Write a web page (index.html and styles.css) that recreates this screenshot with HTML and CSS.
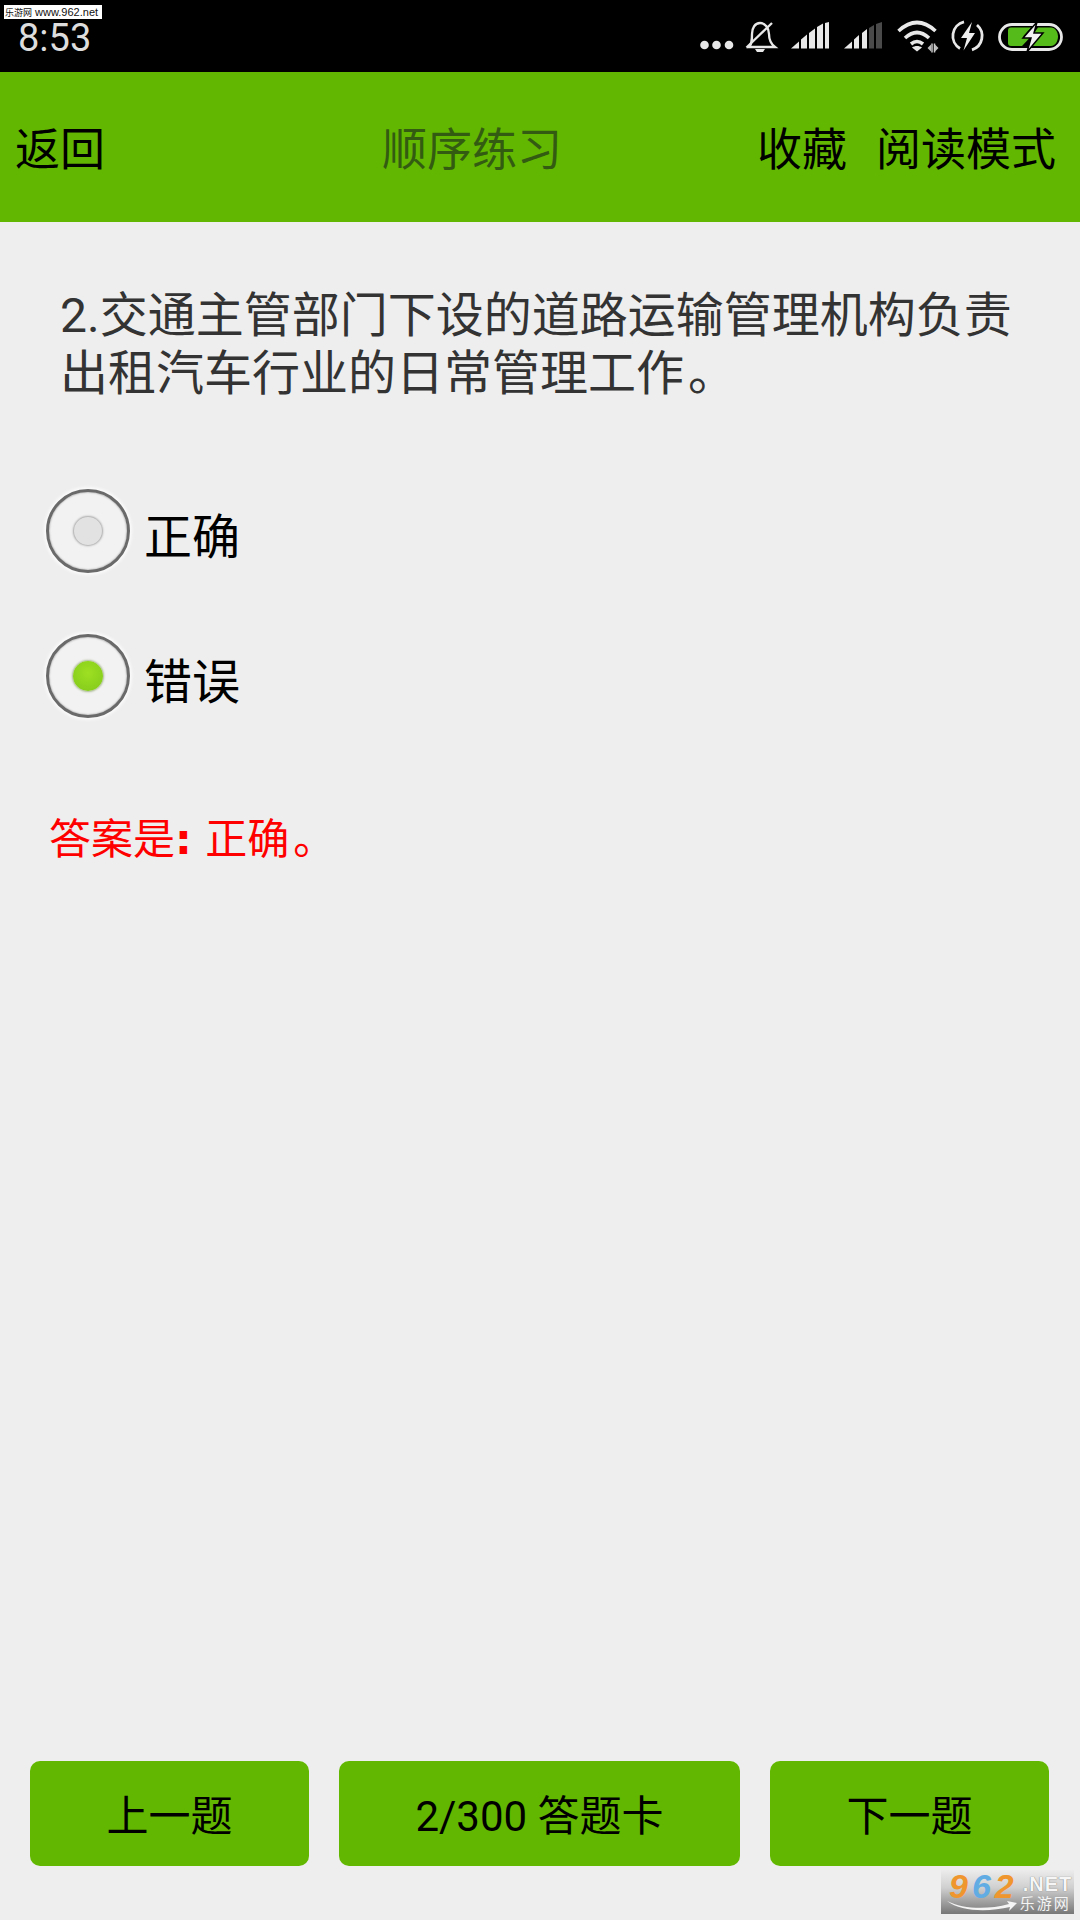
FILE: index.html
```html
<!DOCTYPE html>
<html lang="zh">
<head>
<meta charset="utf-8">
<title>顺序练习</title>
<link rel="stylesheet" href="styles.css">
</head>
<body>
<div class="page">
  <div class="status">
    <div class="clock">8:53</div>
    <svg class="status-icons" viewBox="680 0 400 72" width="400" height="72">
      <g fill="#e8e8e8">
        <circle cx="704.500" cy="45" r="4.300"/><circle cx="716.500" cy="45" r="4.300"/><circle cx="729" cy="45" r="4.300"/>
      </g>
      <path d="M749 47h26c-4-3-6-7-6-13 0-6-4-11-9-11s-8 5-8 11c0 6 0 10-3 13z" fill="none" stroke="#e8e8e8" stroke-width="2.300"/>
      <path d="M746.500 47.500 772 23" fill="none" stroke="#e8e8e8" stroke-width="2.300"/>
      <path d="M755 49h10l-2 3h-6z" fill="#e8e8e8"/>
      <g fill="#e8e8e8">
        <path d="M791 48.500 799 41.500v7z"/><path d="M801 39.500l6-5v14h-6z"/><path d="M809 33l6-4.500v20h-6z"/><path d="M817 27l6-3.500v25h-6z"/><path d="M825 23l4-1v26.500h-4z"/>
        <path d="M844 48.500 852 41.500v7z"/><path d="M854 39.500l5-4.500v13.500h-5z"/><path d="M862 33l5-4v19.500h-5z"/>
      </g>
      <g fill="#4a4a4a"><path d="M869 28l5-3v23.500h-5z"/><path d="M876 24l6-2v26.500h-6z"/></g>
      <g fill="none" stroke="#e8e8e8" stroke-width="3.600">
        <path d="M898.500 31Q917 14 935.500 31"/>
        <path d="M905 38Q917 27 929 38"/>
        <path d="M911 44Q917 39 923 44"/>
      </g>
      <path d="M912 47.500c3-2 7-2 10 0l-5 4z" fill="#e8e8e8"/>
      <path d="M932 43.500v9M934.500 43.500v9" stroke="#c8c8c8" stroke-width="1.500"/>
      <path d="M927.500 48l3.500-3.500v7zM938.500 48l-3.500-3.500v7z" fill="#bbb"/>
      <path d="M964 21.900A14.500 14.500 0 0 0 960 48.500M977 25A14.500 14.500 0 0 1 972 49.800" fill="none" stroke="#e8e8e8" stroke-width="2.800"/>
      <path d="M972 22 961 38h6l-3.500 12.500L975 33h-6z" fill="#f0f0f0"/>
      <rect x="999.500" y="24.500" width="62" height="25" rx="12.500" fill="none" stroke="#e8e8e8" stroke-width="2.800"/>
      <path d="M1011 27.500h20l-8 9h8l-9 9.500h-11a3 3 0 0 1-3-3V30.500a3 3 0 0 1 3-3zM1038 27.500h13c4 0 7 4 7 9s-3 9.500-7 9.500h-21l9-10h-7z" fill="#55bb1a"/>
      <path d="M1037 22 1023 38h8l-4 14 16-19h-9z" fill="#f2f2f2" stroke="#000" stroke-width="1.500"/>
    </svg>
    <div class="stamp"><span class="stamp-cn">乐游网</span> www.962.net</div>
  </div>

  <header class="topbar">
    <span class="nav-back">返回</span>
    <span class="nav-title">顺序练习</span>
    <div class="nav-actions">
      <span>收藏</span>
      <span>阅读模式</span>
    </div>
  </header>

  <main class="content">
    <p class="question">2.交通主管部门下设的道路运输管理机构负责<br>出租汽车行业的日常管理工作<span class="stop">。</span></p>
    <div class="options">
      <div class="option">
        <span class="radio"><span class="dot dot-off"></span></span>
        <span class="option-label">正确</span>
      </div>
      <div class="option">
        <span class="radio"><span class="dot dot-on"></span></span>
        <span class="option-label">错误</span>
      </div>
    </div>
    <p class="answer">答案是<b class="colon">:</b> 正确<span class="stop">。</span></p>
  </main>

  <footer class="actions">
    <div class="btn btn-side">上一题</div>
    <div class="btn btn-mid">2/300 答题卡</div>
    <div class="btn btn-side">下一题</div>
  </footer>

  <div class="mark">
    <div class="mark-num"><span class="o">9</span><span class="b">6</span><span class="o">2</span></div>
    <div class="mark-side">
      <div class="mark-net">.NET</div>
      <div class="mark-cn">乐游网</div>
    </div>
    <svg class="mark-swoosh" viewBox="0 0 70 12" width="70" height="12"><path d="M0 1C16 9 40 10 62 4l-2-3 10 2-8 8 1-4C42 12 14 12 0 1z" fill="#f4f4f4"/></svg>
  </div>
</div>
</body>
</html>
```

FILE: styles.css
```css
* { box-sizing: border-box; }
html, body { margin: 0; padding: 0; }
body {
  width: 1080px;
  height: 1920px;
  overflow: hidden;
  background: #eeeeee;
  font-family: Roboto, "Noto Sans CJK SC", sans-serif;
}
.page {
  position: relative;
  width: 1080px;
  height: 1920px;
  display: flex;
  flex-direction: column;
}
.status {
  position: relative;
  height: 72px;
  flex: none;
  background: #000;
  display: flex;
  align-items: flex-start;
  justify-content: space-between;
}
.clock {
  color: #dddddd;
  font-size: 38px;
  line-height: 42px;
  padding: 17px 0 0 18px;
}
.status-icons { display: block; flex: none; }
.stamp {
  position: absolute;
  left: 4px;
  top: 5px;
  width: 98px;
  height: 14px;
  padding-left: 1px;
  background: #fff;
  color: #111;
  font-family: "Liberation Sans", "Noto Sans CJK SC", sans-serif;
  font-size: 11px;
  line-height: 14px;
  white-space: nowrap;
}
.stamp-cn { font-size: 9px; }
.topbar {
  height: 150px;
  flex: none;
  background: #62b800;
  color: #000;
  font-size: 45px;
  display: flex;
  align-items: center;
  padding: 0 24px 2px 15px;
}
.nav-back { flex: none; }
.nav-title {
  flex: none;
  margin-left: 277px;
  color: #335c12;
}
.nav-actions {
  margin-left: auto;
  display: flex;
  gap: 29px;
}
.content {
  flex: 1;
  min-height: 0;
  display: flex;
  flex-direction: column;
}
.question {
  margin: 65px 0 0;
  padding: 0 40px 0 60px;
  color: #333;
  font-size: 48px;
  line-height: 58px;
}
.stop { margin-left: 4px; }
.options {
  margin-top: 86px;
  padding-left: 46px;
  display: flex;
  flex-direction: column;
  gap: 61px;
}
.option {
  display: flex;
  align-items: center;
  height: 84px;
  gap: 14px;
}
.radio {
  width: 84px;
  height: 84px;
  border-radius: 50%;
  border: 3px solid #6a6a6a;
  background: #f2f2f2;
  box-shadow: 0 0 3px 2px #fbfbfb, inset 0 0 2px #8a8a8a;
  display: flex;
  align-items: center;
  justify-content: center;
  flex: none;
}
.dot {
  display: block;
  width: 28px;
  height: 28px;
  border-radius: 50%;
}
.dot-off {
  background: #e2e2e2;
  box-shadow: 0 0 2px 1px #a8a8a8;
}
.dot-on {
  width: 30px;
  height: 30px;
  background: radial-gradient(circle at 50% 40%, #9ee022, #80c81a);
  box-shadow: 0 0 2px 1px #a8b890;
}
.option-label {
  color: #000;
  font-size: 48px;
  line-height: 60px;
  padding-top: 14px;
}
.answer {
  margin: 96px 0 0;
  padding-left: 49px;
  color: #ff0000;
  font-size: 42px;
  line-height: 52px;
}
.colon {
  font-family: "DejaVu Sans", sans-serif;
  padding-right: 3px;
}
.actions {
  flex: none;
  display: flex;
  gap: 30px;
  padding: 0 31px 54px 30px;
}
.btn {
  height: 105px;
  padding-bottom: 2px;
  background: #62b800;
  border-radius: 10px;
  color: #000;
  font-size: 42px;
  display: flex;
  align-items: center;
  justify-content: center;
}
.btn-side { width: 279px; flex: none; }
.btn-mid { flex: 1; }
.mark {
  position: absolute;
  left: 941px;
  top: 1870px;
  width: 133px;
  height: 44px;
  background: linear-gradient(#ececec, #d0d0d0 40%, #777);
  display: flex;
}
.mark-num {
  flex: none;
  height: 32px;
  font-family: "Liberation Sans", sans-serif;
  font-size: 34px;
  font-weight: bold;
  font-style: italic;
  line-height: 32px;
  padding-left: 8px;
  letter-spacing: 4px;
}
.o { color: #f0962e; }
.b { color: #62ace4; }
.mark-side {
  flex: none;
  margin-left: 1px;
  display: flex;
  flex-direction: column;
  align-items: flex-start;
  white-space: nowrap;
}
.mark-net {
  color: #f6f6f6;
  font-family: "Liberation Sans", sans-serif;
  font-weight: bold;
  font-size: 20px;
  letter-spacing: 1px;
  line-height: 22px;
  padding: 3px 0 0 4px;
  text-shadow: 0 0 1px #555;
}
.mark-cn {
  color: #f4f4f4;
  font-size: 15px;
  letter-spacing: 2px;
  line-height: 18px;
  padding-left: 1px;
}
.mark-swoosh {
  position: absolute;
  left: 6px;
  top: 30px;
}
```
